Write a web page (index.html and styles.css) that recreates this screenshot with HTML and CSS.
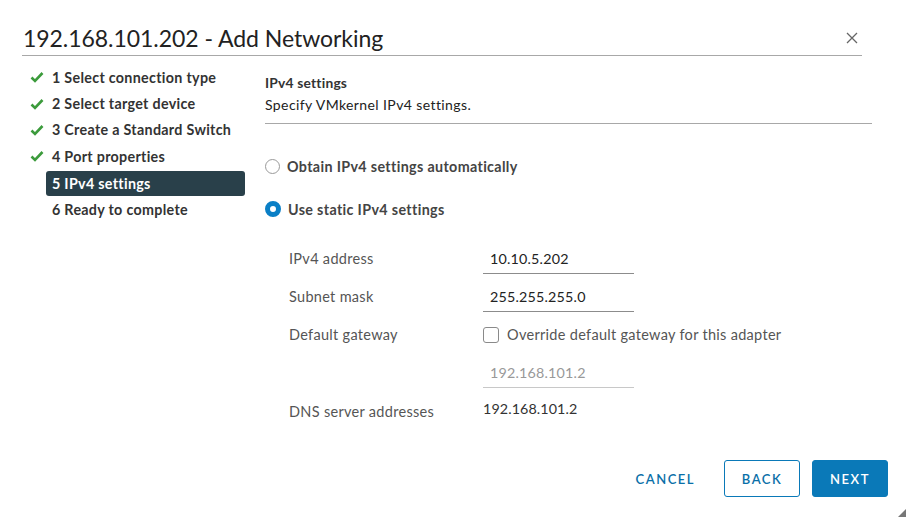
FILE: index.html
```html
<!DOCTYPE html>
<html>
<head>
<meta charset="utf-8">
<link rel="stylesheet" href="styles.css">
</head>
<body>
<div class="dialog">
  <div class="header">
    <h1 class="title">192.168.101.202 - Add Networking</h1>
    <span class="close">
      <svg width="12" height="12" viewBox="0 0 12 12"><path d="M1 1L11 11M11 1L1 11" stroke="#666" stroke-width="1.3" fill="none"/></svg>
    </span>
  </div>
  <div class="body">
    <nav class="steps">
      <div class="step done"><span class="chk"><svg width="14" height="12" viewBox="0 0 14 12"><path d="M1.5 6.5L5 10L12.5 2" stroke="#3c9b3c" stroke-width="2.6" fill="none"/></svg></span>1 Select connection type</div>
      <div class="step done"><span class="chk"><svg width="14" height="12" viewBox="0 0 14 12"><path d="M1.5 6.5L5 10L12.5 2" stroke="#3c9b3c" stroke-width="2.6" fill="none"/></svg></span>2 Select target device</div>
      <div class="step done"><span class="chk"><svg width="14" height="12" viewBox="0 0 14 12"><path d="M1.5 6.5L5 10L12.5 2" stroke="#3c9b3c" stroke-width="2.6" fill="none"/></svg></span>3 Create a Standard Switch</div>
      <div class="step done"><span class="chk"><svg width="14" height="12" viewBox="0 0 14 12"><path d="M1.5 6.5L5 10L12.5 2" stroke="#3c9b3c" stroke-width="2.6" fill="none"/></svg></span>4 Port properties</div>
      <div class="step active"><span class="lbl">5 IPv4 settings</span></div>
      <div class="step"><span class="lbl">6 Ready to complete</span></div>
    </nav>
    <main class="content">
      <div class="sect-head">
        <div class="sect-title">IPv4 settings</div>
        <div class="sect-desc">Specify VMkernel IPv4 settings.</div>
      </div>
      <div class="radios">
        <label class="radio"><span class="rb"></span>Obtain IPv4 settings automatically</label>
        <label class="radio"><span class="rb on"></span>Use static IPv4 settings</label>
      </div>
      <div class="form">
        <div class="row">
          <div class="flabel">IPv4 address</div>
          <div class="field"><div class="input">10.10.5.202</div></div>
        </div>
        <div class="row">
          <div class="flabel">Subnet mask</div>
          <div class="field"><div class="input">255.255.255.0</div></div>
        </div>
        <div class="row">
          <div class="flabel">Default gateway</div>
          <div class="field"><label class="cb"><span class="box"></span>Override default gateway for this adapter</label></div>
        </div>
        <div class="row">
          <div class="flabel"></div>
          <div class="field"><div class="input disabled">192.168.101.2</div></div>
        </div>
        <div class="row dns">
          <div class="flabel">DNS server addresses</div>
          <div class="field"><div class="value">192.168.101.2</div></div>
        </div>
      </div>
    </main>
  </div>
  <div class="footer">
    <button class="btn link">CANCEL</button>
    <button class="btn outline">BACK</button>
    <button class="btn primary">NEXT</button>
  </div>
  <svg class="grip" width="10" height="10" viewBox="0 0 10 10"><path d="M10 2L2 10H10Z" fill="#777"/></svg>
</div>
</body>
</html>
```

FILE: styles.css
```css
html, body {
  margin: 0;
  padding: 0;
  background: #fff;
}
body {
  font-family: Lato, "Open Sans", sans-serif;
  color: #333;
  width: 910px;
  height: 520px;
  overflow: hidden;
}
.dialog {
  position: relative;
  width: 910px;
  height: 520px;
  box-sizing: border-box;
  padding: 0 22px 0 22px;
  display: flex;
  flex-direction: column;
}
.header {
  display: flex;
  align-items: flex-end;
  justify-content: space-between;
  height: 56px;
  border-bottom: 1px solid #a8a8a8;
  margin-right: 26px;
  box-sizing: border-box;
}
.title {
  margin: 0 0 2px 1px;
  font-size: 23px;
  font-weight: 400;
  color: #222;
  letter-spacing: -0.05px;
  line-height: 30px;
}
.close {
  display: flex;
  margin: 0 4px 11px 0;
}
.body {
  display: flex;
  flex: 1;
}
.steps {
  width: 223px;
  flex-shrink: 0;
  padding-top: 8px;
  display: flex;
  flex-direction: column;
}
.step {
  height: 26.4px;
  display: flex;
  align-items: center;
  font-size: 14.3px;
  letter-spacing: 0.3px;
  font-weight: 700;
  color: #333;
  padding-left: 8px;
}
.chk {
  width: 22px;
  display: flex;
  align-items: center;
}
.step .lbl {
  padding-left: 22px;
}
.step.active {
  margin-left: 24px;
  padding-left: 6px;
  height: 25px;
  margin-top: 1px;
  margin-bottom: 0.4px;
  background: #29404a;
  color: #fff;
  border-radius: 3px;
}
.step.active .lbl {
  padding-left: 0;
}
.step:last-child .lbl {
  padding-left: 22px;
}
.content {
  flex: 1;
  min-width: 0;
  padding-left: 20px;
  padding-right: 16px;
  padding-top: 17px;
}
.sect-head {
  border-bottom: 1px solid #a8a8a8;
  padding-bottom: 7px;
}
.sect-title {
  font-size: 13.8px;
  font-weight: 700;
  color: #333;
  line-height: 20px;
  letter-spacing: 0.2px;
}
.sect-desc {
  font-size: 14px;
  letter-spacing: 0.4px;
  color: #222;
  line-height: 22px;
  margin-top: 1px;
}
.radios {
  padding-top: 33px;
  display: flex;
  flex-direction: column;
  gap: 25px;
}
.radio {
  display: flex;
  align-items: center;
  font-size: 14.3px;
  letter-spacing: 0.35px;
  font-weight: 700;
  color: #444;
  height: 18px;
  gap: 7px;
}
.rb {
  width: 15px;
  height: 15px;
  border: 1px solid #9a9a9a;
  border-radius: 50%;
  box-sizing: border-box;
  background: #fff;
}
.rb.on {
  width: 16px;
  height: 16px;
  border: 5px solid #0a7fc6;
  background: #fff;
}
.form {
  padding-top: 28px;
  padding-left: 24px;
  display: flex;
  flex-direction: column;
}
.row {
  display: flex;
  align-items: flex-end;
  height: 38px;
}
.row:first-child {
  height: 28px;
}
.flabel {
  width: 194px;
  flex-shrink: 0;
  font-size: 14.5px;
  letter-spacing: 0.3px;
  color: #555;
  line-height: 20px;
  padding-bottom: 5px;
}
.field {
  flex: 1;
}
.input {
  width: 151px;
  border-bottom: 1px solid #8c8c8c;
  font-size: 14.3px;
  letter-spacing: 0.2px;
  color: #222;
  line-height: 20px;
  padding: 0 0 4px 7px;
  box-sizing: border-box;
}
.input.disabled {
  color: #999;
  border-bottom-color: #c8c8c8;
}
.cb {
  display: flex;
  align-items: center;
  gap: 8px;
  font-size: 14.5px;
  letter-spacing: 0.3px;
  color: #555;
  line-height: 20px;
  padding-bottom: 5px;
}
.box {
  width: 16px;
  height: 16px;
  border: 1px solid #8a8a8a;
  border-radius: 3px;
  box-sizing: border-box;
}
.row.dns {
  height: 36px;
}
.row.dns .flabel {
  padding-bottom: 2px;
}
.value {
  font-size: 14.3px;
  letter-spacing: 0.1px;
  color: #333;
  line-height: 20px;
  padding-bottom: 5px;
}
.footer {
  display: flex;
  justify-content: flex-end;
  align-items: center;
  gap: 12px;
  padding: 0 0 23px 0;
}
.btn {
  font-family: Lato, "Open Sans", sans-serif;
  font-size: 13px;
  font-weight: 600;
  letter-spacing: 1.5px;
  height: 37px;
  min-width: 76px;
  border-radius: 3px;
  box-sizing: border-box;
  cursor: pointer;
}
.btn.link {
  background: none;
  border: none;
  color: #0a6fa8;
  margin-right: 5px;
  padding: 0 12px;
}
.btn.outline {
  background: #fff;
  border: 1px solid #0a79b8;
  color: #0a6fa8;
}
.btn.primary {
  background: #0a79b8;
  border: 1px solid #0a79b8;
  color: #fff;
}
.grip {
  position: absolute;
  right: 4px;
  bottom: 3px;
}
```
